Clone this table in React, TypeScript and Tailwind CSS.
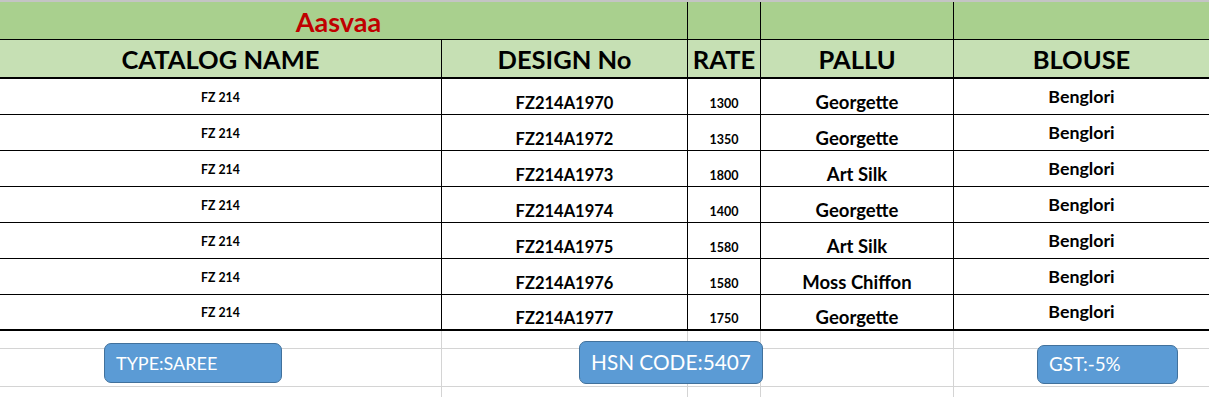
import React from 'react';

const rows = [
  { design: 'FZ214A1970', rate: '1300', pallu: 'Georgette' },
  { design: 'FZ214A1972', rate: '1350', pallu: 'Georgette' },
  { design: 'FZ214A1973', rate: '1800', pallu: 'Art Silk' },
  { design: 'FZ214A1974', rate: '1400', pallu: 'Georgette' },
  { design: 'FZ214A1975', rate: '1580', pallu: 'Art Silk' },
  { design: 'FZ214A1976', rate: '1580', pallu: 'Moss Chiffon' },
  { design: 'FZ214A1977', rate: '1750', pallu: 'Georgette' },
];

function App() {
  return (
    <div className="relative w-[1209px] h-[397px] bg-white overflow-hidden font-['Lato',sans-serif] text-black">
      <div className="h-[2px] bg-[#c4c4c4]" />

      {/* Brand row */}
      <div className="flex h-[38px] bg-[#a9d08e] border-b border-black">
        <div className="w-[688px] border-r border-black flex items-center justify-center pt-[1px] pr-[10px]">
          <span className="text-[27px] font-bold text-[#c00000] leading-none">Aasvaa</span>
        </div>
        <div className="w-[73px] border-r border-black" />
        <div className="w-[193px] border-r border-black" />
        <div className="flex-1" />
      </div>

      {/* Header row */}
      <div className="flex h-[39px] bg-[#c6e0b4] border-b-2 border-black text-[25.5px] font-bold leading-none">
        <div className="w-[442px] border-r border-black flex items-center justify-center pt-[3px]">CATALOG NAME</div>
        <div className="w-[246px] border-r border-black flex items-center justify-center pt-[3px]">DESIGN No</div>
        <div className="w-[73px] border-r border-black flex items-center justify-center pt-[3px]">RATE</div>
        <div className="w-[193px] border-r border-black flex items-center justify-center pt-[3px]">PALLU</div>
        <div className="flex-1 flex items-center justify-center pt-[3px]">BLOUSE</div>
      </div>

      {/* Data rows */}
      {rows.map((r, i) => (
        <div
          key={r.design}
          className={`flex h-[36px] border-black font-bold leading-none ${i === rows.length - 1 ? 'border-b-2' : 'border-b'}`}
        >
          <div className="w-[442px] border-r border-black flex items-center justify-center pt-[3px] text-[12.3px]">FZ 214</div>
          <div className="w-[246px] border-r border-black flex items-end justify-center pb-[3px] text-[16.5px]">{r.design}</div>
          <div className="w-[73px] border-r border-black flex items-end justify-center pb-[4px] text-[12.5px]">{r.rate}</div>
          <div className="w-[193px] border-r border-black flex items-end justify-center pb-[3px] text-[18.5px]">{r.pallu}</div>
          <div className="flex-1 flex items-center justify-center text-[17.8px]">Benglori</div>
        </div>
      ))}

      {/* Empty sheet grid below */}
      {[18, 38, 12].map((h, i) => (
        <div key={i} className={`flex border-[#d4d4d4] ${i < 2 ? 'border-b' : ''}`} style={{ height: h }}>
          <div className="w-[442px] border-r border-[#d4d4d4]" />
          <div className="w-[246px] border-r border-[#d4d4d4]" />
          <div className="w-[73px] border-r border-[#d4d4d4]" />
          <div className="w-[193px] border-r border-[#d4d4d4]" />
          <div className="flex-1" />
        </div>
      ))}

      {/* Floating shapes */}
      <div className="absolute left-[104px] top-[343px] w-[178px] h-[40px] rounded-[7px] bg-[#5b9bd5] border border-[#41719c] flex items-center pl-[11px] text-white text-[18px] leading-none">
        TYPE:SAREE
      </div>
      <div className="absolute left-[579px] top-[341px] w-[184px] h-[43px] rounded-[7px] bg-[#5b9bd5] border border-[#41719c] flex items-center pl-[11px] text-white text-[20.8px] leading-none">
        HSN CODE:5407
      </div>
      <div className="absolute left-[1037px] top-[345px] w-[141px] h-[39px] rounded-[7px] bg-[#5b9bd5] border border-[#41719c] flex items-center pl-[11px] text-white text-[18.8px] leading-none">
        GST:-5%
      </div>
    </div>
  );
}

export default App;
